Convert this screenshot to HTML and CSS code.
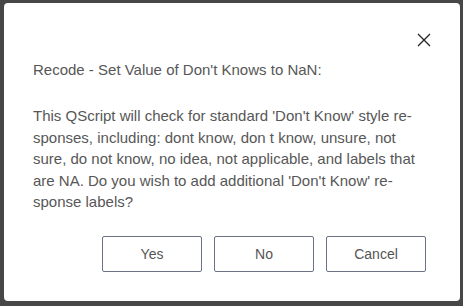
FILE: index.html
```html
<!DOCTYPE html>
<html lang="en">
<head>
  <meta charset="UTF-8" />
  <meta name="viewport" content="width=device-width, initial-scale=1.0" />
  <title>Recode</title>
  <link rel="stylesheet" href="styles.css">
</head>
<body>
  <div class="dialog">
    <div class="dialog-header">
      <button class="close-btn" aria-label="Close">
        <svg width="14" height="14" viewBox="0 0 14 14">
          <path d="M1 1 L13 13 M13 1 L1 13" stroke="#222" stroke-width="1.3" fill="none" />
        </svg>
      </button>
    </div>
    <p class="title">Recode - Set Value of Don't Knows to NaN:</p>
    <p class="message">This QScript will check for standard 'Don't Know' style re&shy;sponses, including: dont know, don t know, unsure, not sure, do not know, no idea, not applicable, and labels that are NA. Do you wish to add additional 'Don't Know' re&shy;sponse labels?</p>
    <div class="actions">
      <button class="btn">Yes</button>
      <button class="btn">No</button>
      <button class="btn">Cancel</button>
    </div>
  </div>
</body>
</html>
```

FILE: styles.css
```css
body {
  margin: 0;
  padding: 3px 3px 0 4px;
  background-color: #474747;
  height: 306px;
  box-sizing: border-box;
  font-family: 'Liberation Sans', Arial, sans-serif;
}

.dialog {
  background-color: #fff;
  border-radius: 4px;
  width: 456px;
  height: 298px;
  box-sizing: border-box;
  padding: 29px 34px 0 29px;
  color: #575757;
}

.dialog-header {
  display: flex;
  justify-content: flex-end;
  height: 20px;
}

.close-btn {
  background: none;
  border: none;
  padding: 0;
  width: 14px;
  height: 14px;
  margin: 1px -5px 0 0;
  cursor: pointer;
}

.close-btn svg {
  display: block;
}

.title {
  margin: 8px 0 0;
  font-size: 15px;
  line-height: 20px;
}

.message {
  margin: 25px 0 0;
  font-size: 15px;
  line-height: 21.6px;
}

.actions {
  display: flex;
  justify-content: flex-end;
  gap: 12px;
  margin-top: 23px;
}

.btn {
  width: 100px;
  height: 36px;
  background-color: #fff;
  border: 1px solid #6b7385;
  border-radius: 2px;
  color: #555;
  font-family: 'Liberation Sans', Arial, sans-serif;
  font-size: 14px;
  cursor: pointer;
}
```
